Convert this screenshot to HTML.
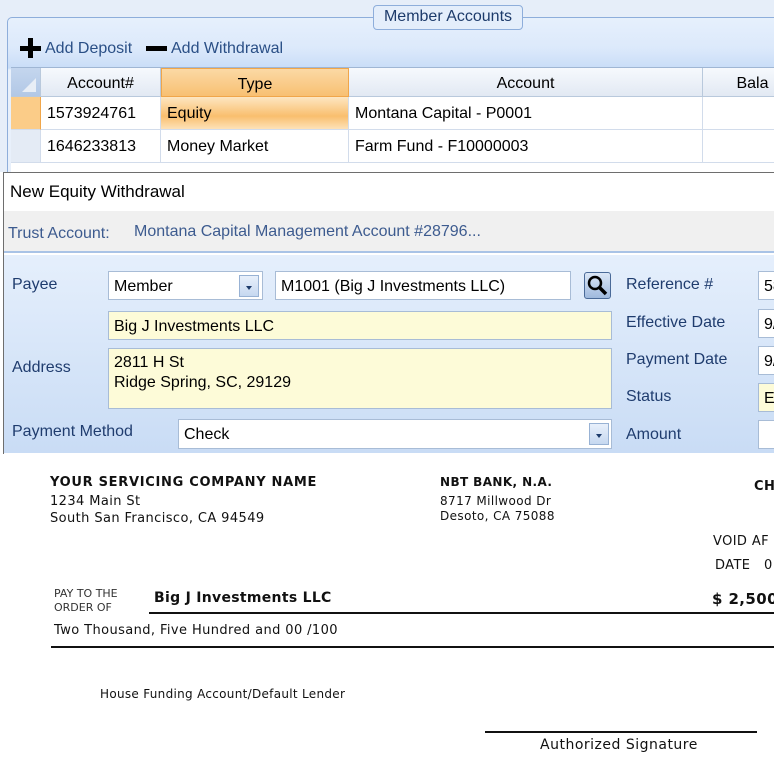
<!DOCTYPE html>
<html><head><style>
*{margin:0;padding:0;box-sizing:border-box}
body{width:774px;height:774px;overflow:hidden;position:relative;background:#fff;font-family:"Liberation Sans",sans-serif;font-size:16px;color:#000}
.a{position:absolute;white-space:nowrap}
.top{position:absolute;left:0;top:0;width:774px;height:172px;background:#e6eef9}
.grp{position:absolute;left:7px;top:17px;width:780px;height:200px;border:1px solid #8eaedb;border-radius:5px;background:linear-gradient(#e6f0fc 0,#dce9fb 30px,#c9ddf7 50px,#e8f0fb 52px)}
.tab{position:absolute;left:373px;top:5px;width:150px;height:25px;border:1px solid #8eaedb;border-radius:4px;background:#e4eefb;color:#1d3b6b;font-size:16px;text-align:center;line-height:22px}
.th{position:absolute;top:68px;height:29px;background:linear-gradient(#f6f9fd,#e2e9f3);border-right:1px solid #b9c9dc;border-bottom:1px solid #b9c9dc;text-align:center;line-height:31px}
.td{position:absolute;height:33px;background:#fff;border-right:1px solid #d2dceb;border-bottom:1px solid #d2dceb;line-height:34px;padding-left:6px}
.box{position:absolute;background:#fff;border:1px solid #a8bcd6;padding-left:5px;line-height:29px}
.yl{background:#fdfbd8}
.lbl{position:absolute;color:#1f3c6e;top:0}
.dd{position:absolute;width:20px;height:22px;background:linear-gradient(#e8f0fb,#c6d8f0);border:1px solid #98b2d4}
.dd:after{content:"";position:absolute;left:6px;top:10px;border:3px solid transparent;border-top:4px solid #1d3b6b}
.ck{font-family:"DejaVu Sans",sans-serif;position:absolute;white-space:nowrap;color:#111;letter-spacing:0.4px}
</style></head><body>
<div class="top"></div>
<div class="grp"></div>
<div class="tab">Member Accounts</div>
<div class="a" style="left:20px;top:38px;width:20px;height:20px">
 <div style="position:absolute;left:8px;top:0;width:5px;height:20px;background:#000"></div>
 <div style="position:absolute;left:0;top:8px;width:21px;height:5px;background:#000"></div></div>
<div class="a" style="left:45px;top:40px;color:#2a4f86">Add Deposit</div>
<div class="a" style="left:146px;top:46px;width:21px;height:5px;background:#000"></div>
<div class="a" style="left:171px;top:40px;color:#2a4f86">Add Withdrawal</div>
<div class="a" style="left:11px;top:67px;width:770px;height:106px;background:#fff;border-top:1px solid #9fb6d4"></div>
<div class="th" style="left:11px;width:30px;background:linear-gradient(#c4d6ee,#b2c8e6)"><div style="position:absolute;right:4px;bottom:4px;border-left:14px solid transparent;border-bottom:14px solid #e8eef6"></div></div>
<div class="th" style="left:41px;width:120px">Account#</div>
<div class="th" style="left:161px;width:188px;background:linear-gradient(#fbd9a5,#f8c072);border:1px solid #f0a64a">Type</div>
<div class="th" style="left:349px;width:354px">Account</div>
<div class="th" style="left:703px;width:100px">Bala</div>
<div class="td" style="left:11px;top:97px;width:30px;background:#fbcc88;border-right:1px solid #f0a64a"></div>
<div class="td" style="left:41px;top:97px;width:120px">1573924761</div>
<div class="td" style="left:161px;top:97px;width:188px;background:linear-gradient(#fde6c2,#f9bf6e 60%,#fde2b8)">Equity</div>
<div class="td" style="left:349px;top:97px;width:354px">Montana Capital - P0001</div>
<div class="td" style="left:703px;top:97px;width:100px"></div>
<div class="td" style="left:11px;top:130px;width:30px;background:#e4ebf5"></div>
<div class="td" style="left:41px;top:130px;width:120px">1646233813</div>
<div class="td" style="left:161px;top:130px;width:188px">Money Market</div>
<div class="td" style="left:349px;top:130px;width:354px">Farm Fund - F10000003</div>
<div class="td" style="left:703px;top:130px;width:100px"></div>
<!-- dialog -->
<div class="a" style="left:3px;top:172px;width:780px;height:282px;border:1px solid #6e6e6e;border-bottom:none;background:#fff"></div>
<div class="a" style="left:10px;top:182px;font-size:17px">New Equity Withdrawal</div>
<div class="a" style="left:4px;top:211px;width:780px;height:42px;background:#f0f0f0;border-bottom:2px solid #a9c3e6"></div>
<div class="a" style="left:8px;top:225px;color:#3d5b8f">Trust Account:</div>
<div class="a" style="left:134px;top:223px;color:#3d5b8f">Montana Capital Management Account #28796...</div>
<div class="a" style="left:4px;top:255px;width:780px;height:198px;background:linear-gradient(#e5effc,#c9dcf5)"></div>
<div class="lbl" style="left:12px;top:276px">Payee</div>
<div class="box" style="left:108px;top:271px;width:155px;height:29px">Member</div>
<div class="dd" style="left:239px;top:275px"></div>
<div class="box" style="left:275px;top:271px;width:296px;height:29px">M1001 (Big J Investments LLC)</div>
<div class="a" style="left:584px;top:272px;width:27px;height:27px;border:1px solid #4a6a98;border-radius:3px;background:linear-gradient(#dbe7f7,#9fb9dd)">
<svg width="25" height="25" viewBox="0 0 25 25"><circle cx="10" cy="10" r="6" fill="none" stroke="#000" stroke-width="2.5"/><path d="M14 14L21 21" stroke="#000" stroke-width="3.5"/></svg></div>
<div class="box yl" style="left:108px;top:311px;width:504px;height:29px">Big J Investments LLC</div>
<div class="lbl" style="left:12px;top:359px">Address</div>
<div class="box yl" style="left:108px;top:348px;width:504px;height:61px;line-height:20px;padding-top:4px">2811 H St<br>Ridge Spring, SC, 29129</div>
<div class="lbl" style="left:12px;top:423px">Payment Method</div>
<div class="box" style="left:178px;top:419px;width:434px;height:30px">Check</div>
<div class="dd" style="left:589px;top:423px"></div>
<div class="lbl" style="left:626px;top:276px">Reference #</div>
<div class="lbl" style="left:626px;top:314px">Effective Date</div>
<div class="lbl" style="left:626px;top:351px">Payment Date</div>
<div class="lbl" style="left:626px;top:388px">Status</div>
<div class="lbl" style="left:626px;top:426px">Amount</div>
<div class="box" style="left:758px;top:271px;width:40px;height:29px">58</div>
<div class="box" style="left:758px;top:309px;width:40px;height:29px">9/</div>
<div class="box" style="left:758px;top:346px;width:40px;height:29px">9/</div>
<div class="box yl" style="left:758px;top:383px;width:40px;height:29px">En</div>
<div class="box" style="left:758px;top:420px;width:40px;height:29px"></div>
<!-- check -->
<div class="ck" style="left:50px;top:475px;font-size:13px;font-weight:bold;letter-spacing:0.7px">YOUR SERVICING COMPANY NAME</div>
<div class="ck" style="left:50px;top:494px;font-size:13px">1234 Main St</div>
<div class="ck" style="left:50px;top:511px;font-size:13px">South San Francisco, CA 94549</div>
<div class="ck" style="left:440px;top:475px;font-size:12px;font-weight:bold">NBT BANK, N.A.</div>
<div class="ck" style="left:440px;top:494px;font-size:12px">8717 Millwood Dr</div>
<div class="ck" style="left:440px;top:509px;font-size:12px">Desoto, CA 75088</div>
<div class="ck" style="left:754px;top:479px;font-size:13px;font-weight:bold">CH</div>
<div class="ck" style="left:713px;top:534px;font-size:13px">VOID AF</div>
<div class="ck" style="left:715px;top:558px;font-size:13px">DATE &nbsp;&nbsp;0</div>
<div class="ck" style="left:54px;top:587px;font-size:11px;line-height:14px;color:#333;letter-spacing:0">PAY TO THE<br>ORDER OF</div>
<div class="ck" style="left:154px;top:590px;font-size:14px;font-weight:bold;letter-spacing:0.3px">Big J Investments LLC</div>
<div class="ck" style="left:712px;top:590px;font-size:15px;font-weight:bold">$ 2,500</div>
<div class="a" style="left:149px;top:612px;width:630px;height:2px;background:#111"></div>
<div class="ck" style="left:54px;top:623px;font-size:13px">Two Thousand, Five Hundred and 00 /100</div>
<div class="a" style="left:51px;top:646px;width:730px;height:2px;background:#111"></div>
<div class="ck" style="left:100px;top:687px;font-size:12px;letter-spacing:0.3px">House Funding Account/Default Lender</div>
<div class="a" style="left:485px;top:731px;width:272px;height:2px;background:#111"></div>
<div class="ck" style="left:540px;top:737px;font-size:14px;letter-spacing:0.5px">Authorized Signature</div>
</body></html>
